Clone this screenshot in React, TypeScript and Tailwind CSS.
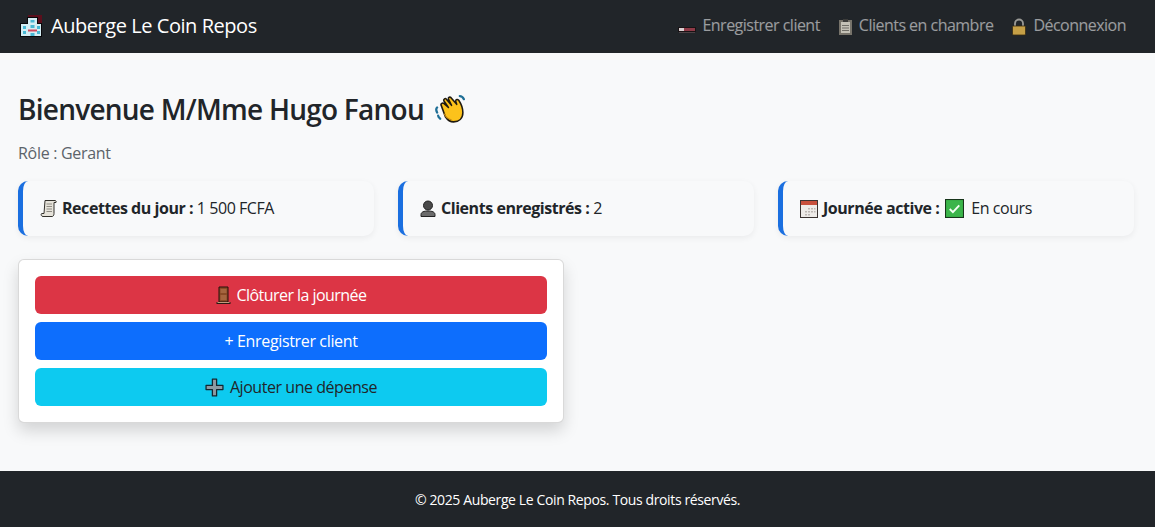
function HotelIcon() {
  return (
    <svg width="23" height="23" viewBox="0 0 23 23" className="shrink-0">
      <path d="M8 0h14v9H8z" fill="#5a0f1c" />
      <path d="M0 8h7V2h11v6h4v14H0z" fill="#08080a" />
      <path d="M1 9h7V3h9v6h4v12H1z" fill="#d4edf3" />
      <path d="M10.500 5h4v2.500h-4zM3 11h3v3H3zM3 16h3v3H3zM17 11h3v3h-3zM17 16h3v3h-3zM10.500 10h4v3h-4z" fill="#48b8d4" />
      <path d="M8 14.500h9v2H8z" fill="#d0475c" />
      <path d="M10.500 18h4v3h-4z" fill="#48b8d4" />
    </svg>
  );
}

function BedIcon() {
  return (
    <svg width="18" height="17" viewBox="0 0 18 17" className="shrink-0">
      <path d="M0 9h18v5H0z" fill="#191214" />
      <path d="M1 10h5v3H1z" fill="#d9cfd0" />
      <path d="M6 10h11v3H6z" fill="#8e3a47" />
      <path d="M1 14h16v1H1z" fill="#4c4245" />
    </svg>
  );
}

function ClipboardIcon() {
  return (
    <svg width="15" height="18" viewBox="0 0 15 18" className="shrink-0">
      <rect x="1" y="2" width="13" height="15" fill="#77736a" />
      <rect x="3" y="4" width="9" height="11" fill="#c4c1b6" />
      <rect x="5" y="1" width="5" height="3" fill="#3c3c3a" />
      <path d="M4 7h7v1H4zM4 9.500h7v1H4zM4 12h7v1H4z" fill="#716f68" />
    </svg>
  );
}

function LockIcon() {
  return (
    <svg width="16" height="18" viewBox="0 0 16 18" className="shrink-0">
      <path d="M4 8V5.500a4 4 0 0 1 8 0V8" fill="none" stroke="#9a9a96" strokeWidth="1.800" />
      <rect x="1.500" y="8" width="13" height="9" rx="1" fill="#c59f46" stroke="#3a2c10" strokeWidth="0.800" />
    </svg>
  );
}

function WaveIcon() {
  return (
    <svg width="33" height="33" viewBox="0 0 32 32" className="shrink-0">
      <path d="M3 19c-1-2-1-4 0-5M6 25c-1-1-2-2-2-3M25 3c2 0 3 1 4 3" fill="none" stroke="#1f6f96" strokeWidth="2.200" strokeLinecap="round" />
      <path d="M7 12c-1-1 1-3 2.500-2L14 14 9.500 7.500C9 6 11 4.500 12 6l5 6-3-6c-.5-2 1.500-2.500 2.500-1.500L22 11l-1-3c0-2 2-2 3-1 2 3 4 8 4 12 0 6-4 9-9 9-4 0-6-2-8-5z" fill="#fcc21b" stroke="#1f1a10" strokeWidth="1.500" strokeLinejoin="round" />
      <path d="M10 20c1 3 3 5 7 6" fill="none" stroke="#c98a10" strokeWidth="1.200" />
    </svg>
  );
}

function ScrollIcon() {
  return (
    <svg width="17" height="19" viewBox="0 0 17 18" className="shrink-0">
      <path d="M5 1h10c1 0 1.500 1 1 2l-2 0v11c0 2-1 3-2 3H3c-2 0-2.500-3-1-3h2z" fill="#e6e3da" stroke="#33312c" strokeWidth="1" />
      <path d="M6.500 4.500h5.500M6.500 7h5.500M6.500 9.500h5.500M6.500 12h5.500" stroke="#8f8c84" strokeWidth="1" />
    </svg>
  );
}

function PersonIcon() {
  return (
    <svg width="16" height="17" viewBox="0 0 16 17" className="shrink-0">
      <path d="M1 16.500v-2c0-2.500 3-3.500 7-3.500s7 1 7 3.500v2z" fill="#6b6b6b" stroke="#222" strokeWidth="1" />
      <circle cx="8" cy="5.500" r="4.500" fill="#4a4a4a" stroke="#222" strokeWidth="1" />
    </svg>
  );
}

function CalendarIcon() {
  return (
    <svg width="18" height="18" viewBox="0 0 18 18" className="shrink-0">
      <rect x="0.500" y="0.500" width="17" height="17" fill="#eeebe8" stroke="#3b3331" />
      <rect x="1" y="1" width="16" height="4" fill="#c8503c" />
      <path d="M8 8h2v1.500H8zM11 8h2v1.500h-2zM14 8h1.500v1.500H14zM5 11h2v1.500H5zM8 11h2v1.500H8zM11 11h2v1.500h-2zM14 11h1.500v1.500H14zM5 14h2v1.500H5zM8 14h2v1.500H8z" fill="#bdb7b3" />
    </svg>
  );
}

function CheckIcon() {
  return (
    <svg width="19" height="19" viewBox="0 0 18 18" className="shrink-0">
      <rect x="0.500" y="0.500" width="17" height="17" fill="#3bb54a" stroke="#17351a" />
      <path d="M4.500 9.500l3 3 6-6.500" fill="none" stroke="#f4fff4" strokeWidth="1.800" />
    </svg>
  );
}

function DoorIcon() {
  return (
    <svg width="15" height="18" viewBox="0 0 14 18" className="shrink-0">
      <path d="M2.500 1h9v15h-9z" fill="#8a4a26" stroke="#24110a" strokeWidth="1" />
      <path d="M4 3h6v4H4zM4 9h6v5H4z" fill="#a5653f" />
      <path d="M0 16h14v2H0z" fill="#2a1a14" />
      <path d="M1 16h12v1H1z" fill="#c39a7c" />
    </svg>
  );
}

function CrossIcon() {
  return (
    <svg width="19" height="19" viewBox="0 0 18 18" className="shrink-0">
      <path d="M7 1h4v6h6v4h-6v6H7v-6H1V7h6z" fill="#8b9aa3" stroke="#142631" strokeWidth="1.200" strokeLinejoin="round" />
    </svg>
  );
}

function NavLink({ icon, label }: { icon: React.ReactNode; label: string }) {
  return (
    <a className="flex items-center gap-[6px] text-[16px] tracking-[-0.52px] text-white/55">
      {icon}
      <span className="pb-[3px]">{label}</span>
    </a>
  );
}

function StatCard({ children }: { children: React.ReactNode }) {
  return (
    <div className="flex h-[55px] flex-1 items-center gap-[5px] rounded-[10px] border-l-[5px] border-[#1a6fe0] bg-[#f8f9fa] pl-[17px] text-[16px] text-[#212529] shadow-[0_2px_6px_rgba(0,0,0,0.06)]">
      {children}
    </div>
  );
}

export default function App() {
  return (
    <div className="flex h-[527px] flex-col bg-[#f8f9fa] font-['Open_Sans','Noto_Sans',sans-serif] tracking-[-0.45px]">
      <nav className="flex h-[53px] shrink-0 items-center justify-between bg-[#212529] pl-[20px] pr-[29px]">
        <div className="flex items-center gap-[8px] text-[20px] text-white">
          <HotelIcon />
          <span className="pb-[1px]">Auberge Le Coin Repos</span>
        </div>
        <div className="flex items-center gap-[18px]">
          <NavLink icon={<BedIcon />} label="Enregistrer client" />
          <NavLink icon={<ClipboardIcon />} label="Clients en chambre" />
          <NavLink icon={<LockIcon />} label="Déconnexion" />
        </div>
      </nav>

      <main className="flex-1 px-[18px] pt-[37px]">
        <h1 className="flex h-[38px] items-center gap-[10px] text-[28px] font-semibold tracking-[-0.75px] text-[#212529]">
          Bienvenue M/Mme Hugo Fanou
          <WaveIcon />
        </h1>
        <p className="mt-[13px] text-[16px] leading-[24px] tracking-[-0.3px] text-[#5c636a]">Rôle : Gerant</p>

        <div className="mt-[16px] flex gap-[24px] pr-[3px]">
          <StatCard>
            <ScrollIcon />
            <span className="pb-[2px]"><b className="font-bold">Recettes du jour :</b> 1 500 FCFA</span>
          </StatCard>
          <StatCard>
            <PersonIcon />
            <span className="pb-[2px]"><b className="font-bold">Clients enregistrés :</b> 2</span>
          </StatCard>
          <StatCard>
            <CalendarIcon />
            <b className="mr-[1px] pb-[2px] font-bold">Journée active :</b>
            <CheckIcon />
            <span className="ml-[2px] pb-[2px]">En cours</span>
          </StatCard>
        </div>

        <div className="mt-[23px] flex w-[546px] flex-col gap-[8px] rounded-[6px] border border-black/15 bg-white p-[16px] shadow-[0_8px_16px_rgba(0,0,0,0.15)]">
          <button className="flex h-[38px] items-center justify-center gap-[6px] rounded-[6px] bg-[#dc3545] text-[16px] tracking-[-0.55px] text-white">
            <DoorIcon />
            <span className="pb-[1px]">Clôturer la journée</span>
          </button>
          <button className="flex h-[38px] items-center justify-center rounded-[6px] bg-[#0d6efd] text-[16px] tracking-[-0.35px] text-white">
            <span className="pb-[1px]">+ Enregistrer client</span>
          </button>
          <button className="flex h-[38px] items-center justify-center gap-[6px] rounded-[6px] bg-[#0dcaf0] text-[16px] text-[#212529]">
            <CrossIcon />
            <span className="pb-[1px]">Ajouter une dépense</span>
          </button>
        </div>
      </main>

      <footer className="flex h-[56px] shrink-0 items-center justify-center bg-[#212529] text-[14px] tracking-[-0.38px] text-white">
        © 2025 Auberge Le Coin Repos. Tous droits réservés.
      </footer>
    </div>
  );
}
